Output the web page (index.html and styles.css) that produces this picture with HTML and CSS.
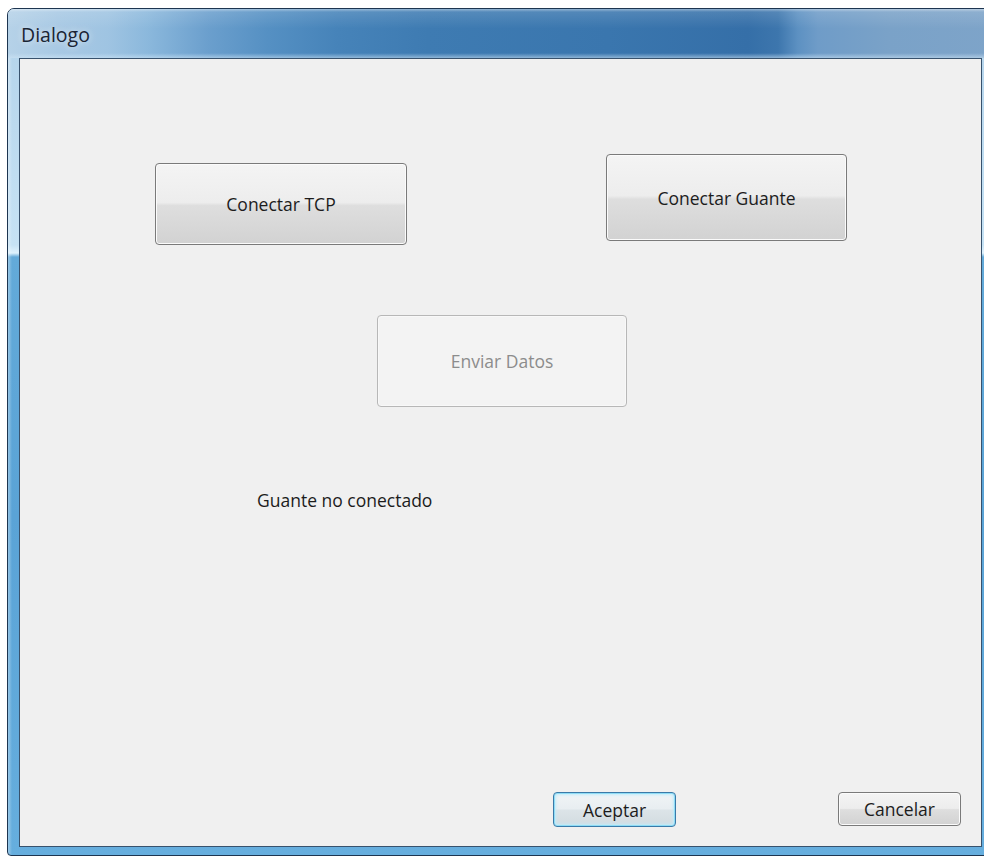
FILE: index.html
```html
<!DOCTYPE html>
<html lang="es">
<head>
<meta charset="utf-8">
<title>Dialogo</title>
<link rel="stylesheet" href="styles.css">
</head>
<body>
  <div class="window">
    <div class="titlebar">
      <span class="title">Dialogo</span>
    </div>
    <div class="frame">
      <div class="client">
        <div class="row-top">
          <button class="btn btn-tcp" type="button">Conectar TCP</button>
          <button class="btn btn-guante" type="button">Conectar Guante</button>
        </div>
        <div class="row-mid">
          <button class="btn btn-enviar" type="button" disabled>Enviar Datos</button>
        </div>
        <div class="status">Guante no conectado</div>
        <div class="footer">
          <button class="btn btn-default btn-ok" type="button">Aceptar</button>
          <button class="btn btn-cancel" type="button">Cancelar</button>
        </div>
      </div>
    </div>
  </div>
</body>
</html>
```
FILE: styles.css
```css
html, body {
  margin: 0;
  padding: 0;
}

body {
  width: 984px;
  height: 857px;
  overflow: hidden;
  background: #ffffff;
  font-family: "Open Sans", "Noto Sans", sans-serif;
}

/* Aero-style window frame */
.window {
  box-sizing: border-box;
  width: 987px;
  height: 848px;
  margin: 8px 0 0 7px;
  border: 1px solid #1d3550;
  border-radius: 7px 7px 4px 4px;
  overflow: hidden;
  display: flex;
  flex-direction: column;
  background:
    linear-gradient(to right, rgba(255,255,255,0.35) 0, rgba(255,255,255,0) 4px),
    linear-gradient(to bottom, #b2d2ea 0, #c6e2f4 236px, #dff2fd 244px, #63aad9 248px, #5aa3d6 60%, #66aede 100%);
}

.titlebar {
  height: 49px;
  flex: none;
  display: flex;
  align-items: flex-start;
  padding-left: 13px;
  background:
    linear-gradient(to bottom, rgba(255,255,255,0.45) 0, rgba(255,255,255,0.12) 3px, rgba(255,255,255,0) 40%, rgba(255,255,255,0) 90%, rgba(210,232,248,0.55) 100%),
    linear-gradient(to right,
      #b6d2e8 0,
      #a8c9e4 50px,
      #9fc4e2 100px,
      #8bb8dc 140px,
      #6b9fcd 200px,
      #5590c3 260px,
      #4683b9 330px,
      #3e7bb2 420px,
      #3a76ae 600px,
      #356fa8 740px,
      #3d76ad 770px,
      #5d91c2 790px,
      #6f9cc8 810px,
      #7aa2c8 880px,
      #7ea4c9 990px);
}

.title {
  font-size: 19.5px;
  line-height: 49px;
  padding-top: 1px;
  color: #1a2433;
  text-shadow: 0 0 6px rgba(255,255,255,0.55), 0 0 12px rgba(255,255,255,0.35);
}

.frame {
  flex: 1;
  padding: 0 11px 8px 11px;
}

/* Dialog client area */
.client {
  box-sizing: border-box;
  width: 963px;
  height: 789px;
  border: 1px solid #38526d;
  background: #f0f0f0;
  display: flex;
  flex-direction: column;
  padding: 95px 0 19px 0;
  color: #1c1c1c;
}

.row-top {
  display: flex;
  align-items: flex-start;
  gap: 199px;
  padding-left: 135px;
}

.row-mid {
  margin-top: 70px;
  padding-left: 357px;
}

.status {
  margin-top: 81px;
  padding-left: 237px;
  font-size: 17.5px;
  line-height: 24px;
  color: #1c1c1c;
}

.footer {
  margin-top: auto;
  display: flex;
  align-items: flex-start;
  justify-content: flex-end;
  gap: 162px;
  padding-right: 20px;
}

/* Push buttons */
.btn {
  box-sizing: border-box;
  display: flex;
  align-items: center;
  justify-content: center;
  margin: 0;
  padding: 0;
  font-family: "Open Sans", "Noto Sans", sans-serif;
  font-size: 17.5px;
  color: #1c1c1c;
  border: 1px solid #7a7a7a;
  border-radius: 4px;
  background: linear-gradient(to bottom, #f4f4f4 0, #ededed 48%, #dedede 52%, #d2d2d2 100%);
  box-shadow: inset 0 0 0 1px #fbfbfb;
}

.btn-tcp {
  margin-top: 9px;
  width: 252px;
  height: 82px;
}

.btn-guante {
  width: 241px;
  height: 87px;
}

.btn-enviar {
  width: 250px;
  height: 92px;
}

.btn:disabled {
  color: #8c8c8c;
  border-color: #b7b7b7;
  background: #f3f3f3;
  box-shadow: inset 0 0 0 1px #f8f8f8;
}

.btn-ok {
  width: 123px;
  height: 35px;
}

.btn-cancel {
  width: 123px;
  height: 34px;
}

.btn-default {
  border-color: #3a7aa8;
  background: linear-gradient(to bottom, #f0f4f6 0, #e8eef1 48%, #dce4e8 52%, #d2dbe0 100%);
  box-shadow: inset 0 0 0 1px #8edcf6, inset 0 0 3px 2px #c0ecfb;
}
```
